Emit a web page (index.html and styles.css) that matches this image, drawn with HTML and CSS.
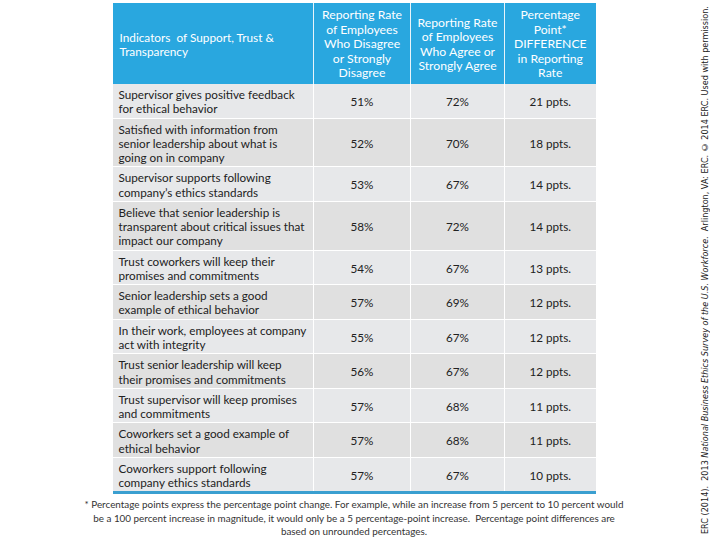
FILE: index.html
```html
<!DOCTYPE html>
<html>
<head>
<meta charset="utf-8">
<link rel="stylesheet" href="styles.css">
</head>
<body>
<div class="page">
  <main class="main">
    <table class="data">
      <colgroup>
        <col class="c1"><col class="c2"><col class="c3"><col class="c4">
      </colgroup>
      <thead>
        <tr>
          <th class="first">Indicators&nbsp; of Support, Trust &amp;<br>Transparency</th>
          <th>Reporting Rate<br>of Employees<br>Who Disagree<br>or Strongly<br>Disagree</th>
          <th>Reporting Rate<br>of Employees<br>Who Agree or<br>Strongly Agree</th>
          <th>Percentage<br>Point*<br>DIFFERENCE<br>in Reporting<br>Rate</th>
        </tr>
      </thead>
      <tbody>
        <tr><td class="label">Supervisor gives positive feedback<br>for ethical behavior</td><td>51%</td><td>72%</td><td>21 ppts.</td></tr>
        <tr><td class="label">Satisfied with information from<br>senior leadership about what is<br>going on in company</td><td>52%</td><td>70%</td><td>18 ppts.</td></tr>
        <tr><td class="label">Supervisor supports following<br>company’s ethics standards</td><td>53%</td><td>67%</td><td>14 ppts.</td></tr>
        <tr><td class="label">Believe that senior leadership is<br>transparent about critical issues that<br>impact our company</td><td>58%</td><td>72%</td><td>14 ppts.</td></tr>
        <tr><td class="label">Trust coworkers will keep their<br>promises and commitments</td><td>54%</td><td>67%</td><td>13 ppts.</td></tr>
        <tr><td class="label">Senior leadership sets a good<br>example of ethical behavior</td><td>57%</td><td>69%</td><td>12 ppts.</td></tr>
        <tr><td class="label">In their work, employees at company<br>act with integrity</td><td>55%</td><td>67%</td><td>12 ppts.</td></tr>
        <tr><td class="label">Trust senior leadership will keep<br>their promises and commitments</td><td>56%</td><td>67%</td><td>12 ppts.</td></tr>
        <tr><td class="label">Trust supervisor will keep promises<br>and commitments</td><td>57%</td><td>68%</td><td>11 ppts.</td></tr>
        <tr><td class="label">Coworkers set a good example of<br>ethical behavior</td><td>57%</td><td>68%</td><td>11 ppts.</td></tr>
        <tr><td class="label">Coworkers support following<br>company ethics standards</td><td>57%</td><td>67%</td><td>10 ppts.</td></tr>
      </tbody>
    </table>
    <p class="note">* Percentage points express the percentage point change. For example, while an increase from 5 percent to 10 percent would<br>be a 100 percent increase in magnitude, it would only be a 5 percentage-point increase.&nbsp; Percentage point differences are<br>based on unrounded percentages.</p>
  </main>
  <aside class="side">
    <p class="credit">ERC (2014).&nbsp; 2013 <i>National Business Ethics Survey of the U.S. Workforce</i>.&nbsp; Arlington, VA: ERC. © 2014 ERC. Used with permission.</p>
  </aside>
</div>
</body>
</html>
```
FILE: styles.css
```css
html, body {
  margin: 0;
  padding: 0;
  background: #ffffff;
}
.page {
  display: flex;
  width: 720px;
  height: 540px;
  overflow: hidden;
}
.main {
  width: 540px;
  flex: none;
  margin-left: 84px;
  padding-top: 3px;
  font-family: "Lato", "Liberation Sans", sans-serif;
}
.data {
  width: 483px;
  margin: 0 auto;
  border-collapse: collapse;
  table-layout: fixed;
  font-size: 11.7px;
  line-height: 14.27px;
  color: #222;
}
.c1 { width: 201px; }
.c2 { width: 97px; }
.c3 { width: 94px; }
.c4 { width: 91px; }
.data th {
  background: #29a7df;
  color: #fff;
  font-weight: normal;
  font-size: 12.2px;
  line-height: 14.5px;
  height: 78px;
  padding: 2px 0 0;
  border-left: 1px solid #e8f4fa;
  text-align: center;
  vertical-align: middle;
  white-space: nowrap;
}
.data th.first {
  text-align: left;
  font-size: 11.8px;
  padding: 3px 0 0 7px;
  border-left: none;
}
.data td {
  padding: 3px 0 2px;
  text-align: center;
  vertical-align: middle;
  border-left: 1px solid #ffffff;
  border-top: 1px solid #ffffff;
  background: #e7e8ea;
  white-space: nowrap;
}
.data tbody tr:nth-child(even) td {
  background: #e0e0e0;
}
.data tbody tr:first-child td {
  border-top: none;
}
.data td.label {
  text-align: left;
  padding-left: 6px;
  border-left: none;
}
.data tbody tr:last-child td {
  border-bottom: 3px solid #3a9fd0;
}
.note {
  margin: 4px 0 0;
  text-align: center;
  font-size: 9.9px;
  line-height: 13.5px;
  color: #333;
  white-space: nowrap;
}
.side {
  flex: 1;
  display: flex;
  justify-content: flex-end;
  padding-right: 10px;
}
.credit {
  margin: 0;
  writing-mode: vertical-rl;
  transform: rotate(180deg);
  text-align: center;
  font-family: "DejaVu Sans", sans-serif;
  font-size: 8.1px;
  line-height: 10px;
  color: #222;
  height: 540px;
  white-space: nowrap;
}
```
